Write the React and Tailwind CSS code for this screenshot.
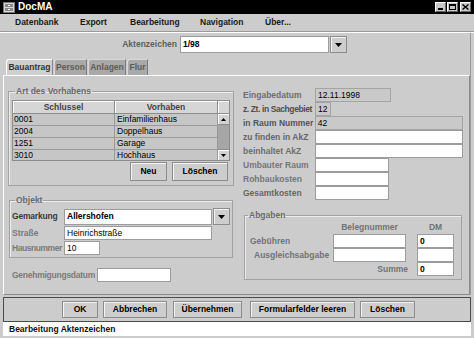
import React from 'react';

function Field({ className = '', children, gray = false, bold = false }) {
  return (
    <div
      className={`${className} border flex items-center px-[2px] text-[8.5px] leading-none text-black whitespace-nowrap overflow-hidden ${
        gray ? 'bg-[#c9c9c9] border-[#a4a4a4]' : 'bg-white border-[#9c9c9c]'
      } ${bold ? 'font-bold' : ''}`}
    >
      {children}
    </div>
  );
}

function Btn({ className = '', children }) {
  return (
    <div
      className={`${className} flex items-center justify-center bg-[#cdcdcd] border border-[#8c8c8c] shadow-[inset_1px_1px_0_#f4f4f4] text-[8.5px] font-bold text-black leading-none whitespace-nowrap`}
    >
      {children}
    </div>
  );
}

function Arrow() {
  return (
    <div className="w-[17px] h-[17px] flex items-center justify-center bg-[#cdcdcd] border border-[#8c8c8c] shadow-[inset_1px_1px_0_#f4f4f4]">
      <svg width="7" height="4" viewBox="0 0 7 4">
        <path d="M0 0h7L3.5 4z" fill="#000" />
      </svg>
    </div>
  );
}

function Group({ title, className = '', children }) {
  return (
    <fieldset className={`${className} border border-[#a2a2a2] shadow-[inset_1px_1px_0_#ececec]`}>
      <legend className="ml-[3px] px-[1px] text-[8.5px] font-bold text-[#6a6a6a] leading-[10px]">{title}</legend>
      {children}
    </fieldset>
  );
}

const rows = [
  ['0001', 'Einfamilienhaus'],
  ['2004', 'Doppelhaus'],
  ['1251', 'Garage'],
  ['3010', 'Hochhaus'],
];

const details = [
  { label: 'Eingabedatum', w: 'w-[76px]', value: '12.11.1998', gray: true, tone: 'text-[#6e6e6e]' },
  { label: 'z. Zt. in Sachgebiet', w: 'w-[16px]', value: '12', gray: true, tone: 'text-[#4e4e4e] tracking-[-0.4px]' },
  { label: 'in Raum Nummer', w: 'w-[149px]', value: '42', gray: true, tone: 'text-[#555]' },
  { label: 'zu finden in AkZ', w: 'w-[148px]', tone: 'text-[#666]' },
  { label: 'beinhaltet AkZ', w: 'w-[148px]', tone: 'text-[#6e6e6e]' },
  { label: 'Umbauter Raum', w: 'w-[74px]', tone: 'text-[#777]' },
  { label: 'Rohbaukosten', w: 'w-[74px]', tone: 'text-[#777]' },
  { label: 'Gesamtkosten', w: 'w-[74px]', tone: 'text-[#666]' },
];

const menu = [
  ['Datenbank', 'w-[65px]'],
  ['Export', 'w-[50px]'],
  ['Bearbeitung', 'w-[70px]'],
  ['Navigation', 'w-[65px]'],
  ['Über...', 'w-[40px]'],
];

export default function App() {
  return (
    <div className="w-[474px] h-[338px] overflow-hidden bg-[#cccccc] flex flex-col font-['Liberation_Sans',Arial,sans-serif] text-[#222]">
      {/* title bar */}
      <div className="h-[14px] bg-black flex items-center shrink-0">
        <svg className="ml-[3px]" width="12" height="11" viewBox="0 0 12 11">
          <rect x="0.5" y="0.5" width="11" height="10" fill="#d8d8d8" stroke="#777" />
          <rect x="2" y="2" width="8" height="3" fill="#8a8a8a" />
          <rect x="2" y="6" width="8" height="3" fill="#8a8a8a" />
          <rect x="5" y="3" width="2" height="1" fill="#fff" />
          <rect x="5" y="7" width="2" height="1" fill="#fff" />
        </svg>
        <span className="ml-[3px] text-white font-bold text-[10px] leading-none">DocMA</span>
        <div className="ml-auto mr-[3px] flex gap-[1px]">
          <div className="w-[11px] h-[10px] bg-[#c8c8c8] border border-t-white border-l-white border-r-[#666] border-b-[#666] flex items-end justify-center pb-[1px]">
            <div className="w-[5px] h-[2px] bg-black" />
          </div>
          <div className="w-[11px] h-[10px] bg-[#c8c8c8] border border-t-white border-l-white border-r-[#666] border-b-[#666] flex items-center justify-center">
            <div className="w-[7px] h-[6px] border border-black border-t-2" />
          </div>
          <div className="ml-[1px] w-[11px] h-[10px] bg-[#c8c8c8] border border-t-white border-l-white border-r-[#666] border-b-[#666] flex items-center justify-center">
            <svg width="7" height="6" viewBox="0 0 7 6">
              <path d="M0.5 0.5l6 5M6.5 0.5l-6 5" stroke="#000" strokeWidth="1.4" />
            </svg>
          </div>
        </div>
      </div>

      {/* menu bar */}
      <div className="h-[17px] flex items-center pl-[15px] shrink-0 text-[8.5px] font-bold text-[#1a1a1a] leading-none">
        {menu.map(([name, w]) => (
          <span key={name} className={w}>
            {name}
          </span>
        ))}
      </div>
      <div className="h-[1px] bg-[#9a9a9a] border-b border-white box-content shrink-0" />

      {/* content */}
      <div className="mx-[3px] h-[262px] flex flex-col shrink-0 border-r border-[#9a9a9a]">
        <div className="mt-[3px] h-[17px] flex items-center">
          <div className="w-[174px] text-right text-[8.5px] font-bold text-[#5e5e5e] leading-none">Aktenzeichen</div>
          <Field className="ml-[3px] w-[149px] h-[17px]" bold>
            1/98
          </Field>
          <div className="ml-[1px]">
            <Arrow />
          </div>
        </div>

        {/* tabs */}
        <div className="mt-[6px] h-[16px] flex items-end pl-[3px] gap-[1px] text-[8.5px] font-bold leading-none">
          <div className="h-[16px] w-[47px] flex items-center justify-center bg-[#cfcfcf] border border-b-0 border-t-white border-l-white border-r-[#8a8a8a] rounded-tl-[3px] text-[#333]">
            Bauantrag
          </div>
          <div className="h-[16px] w-[33px] flex items-center justify-center bg-[#a9a9a9] border border-b-0 border-t-[#d8d8d8] border-l-[#d8d8d8] border-r-[#7a7a7a] rounded-tl-[3px] text-[#5c5c5c]">
            Person
          </div>
          <div className="h-[16px] w-[38px] flex items-center justify-center bg-[#a9a9a9] border border-b-0 border-t-[#d8d8d8] border-l-[#d8d8d8] border-r-[#7a7a7a] rounded-tl-[3px] text-[#5c5c5c]">
            Anlagen
          </div>
          <div className="h-[16px] w-[21px] flex items-center justify-center bg-[#a9a9a9] border border-b-0 border-t-[#d8d8d8] border-l-[#d8d8d8] border-r-[#7a7a7a] rounded-tl-[3px] text-[#5c5c5c]">
            Flur
          </div>
        </div>

        {/* tab panel */}
        <div className="flex-1 border border-t-white border-l-white border-r-[#8a8a8a] border-b-[#8a8a8a] flex pl-[4px]">
          {/* left column */}
          <div className="w-[224px] flex flex-col">
            <Group title="Art des Vorhabens" className="mt-[10px] px-[3px] pb-[4px]">
              <div className="mt-[4px] w-[218px] border border-[#8c8c8c] flex bg-[#c6c6c6]">
                <div className="w-[205px] flex flex-col">
                  <div className="h-[13px] flex text-[8.5px] font-bold text-[#444] leading-none">
                    <div className="w-[102px] flex items-center justify-center bg-[#d6d6d6] border-r border-b border-[#8c8c8c] shadow-[inset_1px_1px_0_#fff]">
                      Schlussel
                    </div>
                    <div className="w-[103px] flex items-center justify-center bg-[#d6d6d6] border-r border-b border-[#8c8c8c] shadow-[inset_1px_1px_0_#fff]">
                      Vorhaben
                    </div>
                  </div>
                  <div className="h-[46px] overflow-hidden">
                    {rows.map(([k, v]) => (
                      <div key={k} className="h-[12px] flex text-[8.5px] text-black leading-none border-b border-[#9a9a9a]">
                        <div className="w-[102px] pl-[1px] flex items-center border-r border-[#9a9a9a]">{k}</div>
                        <div className="w-[103px] pl-[2px] flex items-center border-r border-[#9a9a9a]">{v}</div>
                      </div>
                    ))}
                  </div>
                </div>
                <div className="flex-1 flex flex-col">
                  <div className="h-[13px] bg-[#d6d6d6] border-b border-[#8c8c8c] shadow-[inset_1px_1px_0_#fff]" />
                  <div className="h-[11px] flex items-center justify-center bg-[#d2d2d2] border-b border-[#8c8c8c] shadow-[inset_1px_1px_0_#fff]">
                    <svg width="5" height="3" viewBox="0 0 5 3">
                      <path d="M0 3h5L2.5 0z" fill="#000" />
                    </svg>
                  </div>
                  <div className="flex-1 bg-[#a6a6a6]" />
                  <div className="h-[11px] flex items-center justify-center bg-[#d2d2d2] border-t border-[#8c8c8c] shadow-[inset_1px_1px_0_#fff]">
                    <svg width="5" height="3" viewBox="0 0 5 3">
                      <path d="M0 0h5L2.5 3z" fill="#000" />
                    </svg>
                  </div>
                </div>
              </div>
              <div className="mt-[1px] flex justify-end gap-[5px] pr-[2px]">
                <Btn className="w-[37px] h-[19px]">Neu</Btn>
                <Btn className="w-[56px] h-[19px]">Löschen</Btn>
              </div>
            </Group>

            <Group title="Objekt" className="mt-[9px] ml-[1px] w-[222px] px-[2px] pb-[2px]">
              <div className="mt-[3px] h-[17px] flex items-center">
                <div className="w-[52px] text-[8.5px] font-bold text-[#3a3a3a] leading-none whitespace-nowrap tracking-[-0.2px]">Gemarkung</div>
                <Field className="w-[148px] h-[16px]" bold>
                  Allershofen
                </Field>
                <div className="ml-[1px]">
                  <Arrow />
                </div>
              </div>
              <div className="mt-[1px] h-[14px] flex items-center">
                <div className="w-[52px] text-[8.5px] font-bold text-[#7a7a7a] leading-none">Straße</div>
                <Field className="w-[148px] h-[14px]">Heinrichstraße</Field>
              </div>
              <div className="mt-[1px] h-[14px] flex items-center">
                <div className="w-[52px] text-[8.5px] font-bold text-[#7a7a7a] leading-none whitespace-nowrap tracking-[-0.45px]">Hausnummer</div>
                <Field className="w-[36px] h-[14px]">10</Field>
              </div>
            </Group>

            <div className="mt-[10px] h-[14px] flex items-center pl-[4px]">
              <div className="w-[85px] text-[8.5px] font-bold text-[#7a7a7a] leading-none whitespace-nowrap tracking-[-0.25px]">Genehmigungsdatum</div>
              <Field className="w-[74px] h-[14px]" />
            </div>
          </div>

          {/* right column */}
          <div className="ml-[11px] w-[220px] flex flex-col">
            <div className="mt-[12px] flex flex-col">
              {details.map((d) => (
                <div key={d.label} className="h-[14px] flex items-center">
                  <div className={`w-[72px] text-[8.5px] font-bold leading-none whitespace-nowrap ${d.tone}`}>{d.label}</div>
                  <Field className={`${d.w} h-[14px]`} gray={d.gray}>
                    {d.value}
                  </Field>
                </div>
              ))}
            </div>

            <Group title="Abgaben" className="mt-[10px] ml-[1px] w-[218px] pb-[3px]">
              <div className="grid grid-cols-[88px_73px_11px_37px] text-[8.5px] font-bold text-[#737373] leading-none">
                <div className="h-[14px]" />
                <div className="h-[14px] flex items-center justify-center">Belegnummer</div>
                <div />
                <div className="h-[14px] flex items-center justify-center">DM</div>

                <div className="h-[14px] flex items-center pl-[5px]">Gebühren</div>
                <Field className="h-[14px]" />
                <div />
                <Field className="h-[14px]">0</Field>

                <div className="h-[14px] flex items-center pl-[9px]">Ausgleichsabgabe</div>
                <Field className="h-[14px]" />
                <div />
                <Field className="h-[14px]" />

                <div className="col-span-2 h-[14px] flex items-center justify-end pr-[1px] mr-[-3px]">Summe</div>
                <div />
                <Field className="h-[14px]">0</Field>
              </div>
            </Group>
          </div>
        </div>
      </div>

      {/* button bar */}
      <div className="mt-[2px] mx-[3px] h-[25px] shrink-0 border border-[#4a4a4a] flex items-center pl-[58px] gap-[5px]">
        <Btn className="w-[36px] h-[17px]">OK</Btn>
        <Btn className="w-[64px] h-[17px]">Abbrechen</Btn>
        <Btn className="ml-[1px] w-[69px] h-[17px]">Übernehmen</Btn>
        <Btn className="ml-[3px] w-[105px] h-[17px]">Formularfelder leeren</Btn>
        <Btn className="w-[55px] h-[17px]">Löschen</Btn>
      </div>

      {/* status bar */}
      <div className="mx-[3px] h-[14px] shrink-0 bg-white flex items-center pl-[6px] text-[8.5px] font-bold text-[#111] leading-none">
        Bearbeitung Aktenzeichen
      </div>
    </div>
  );
}
